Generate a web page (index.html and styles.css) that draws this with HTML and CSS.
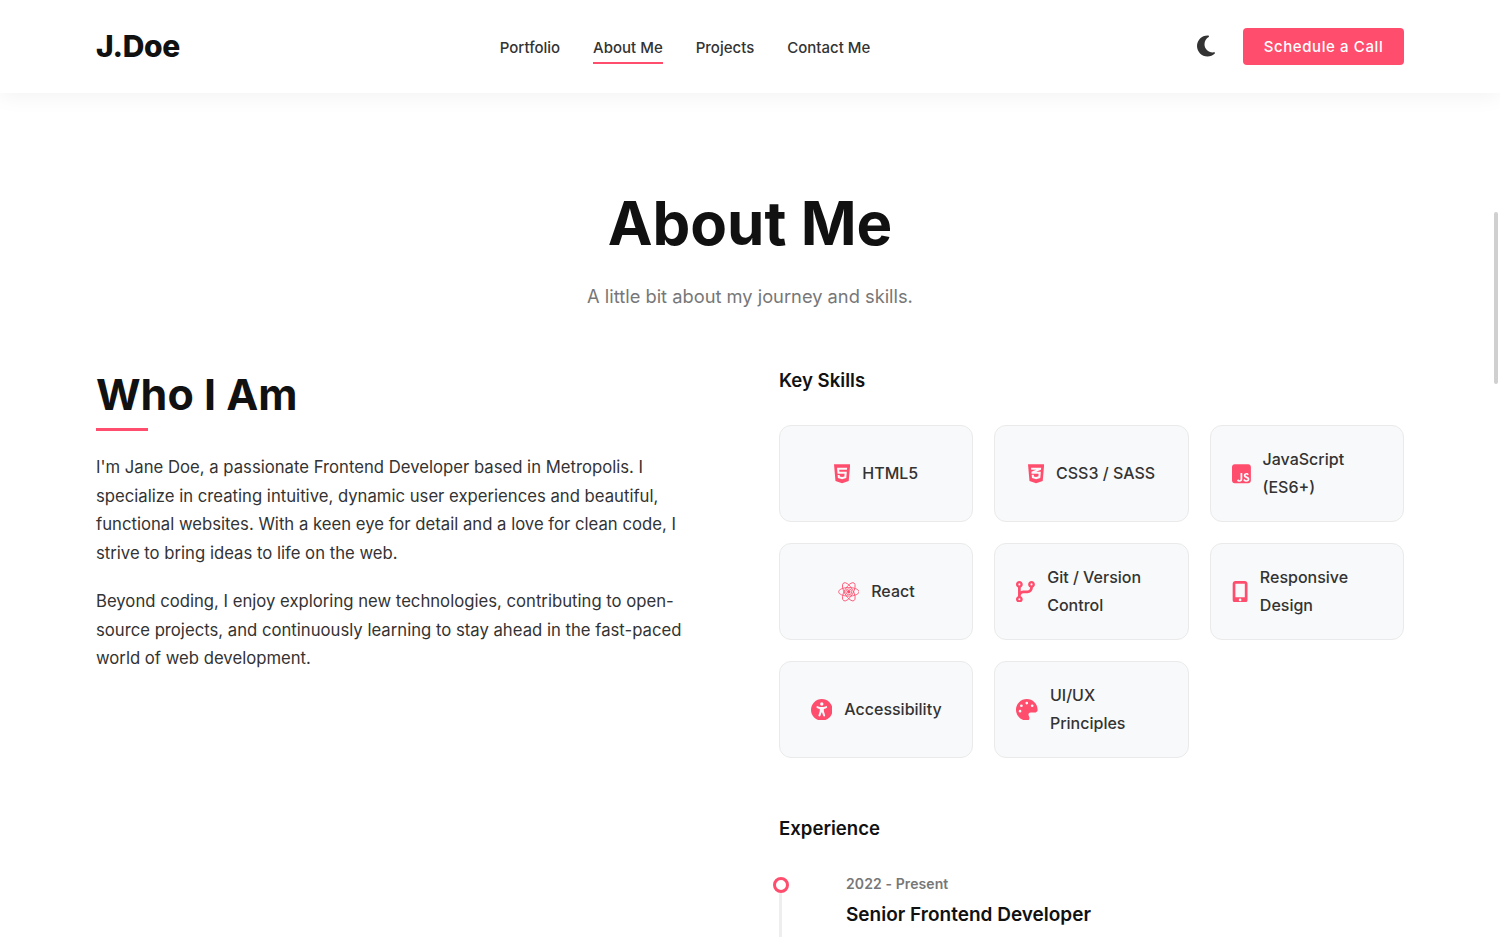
FILE: index.html
```html
<!DOCTYPE html>
<html lang="en">
<head>
    <meta charset="UTF-8">
    <meta name="viewport" content="width=device-width, initial-scale=1.0">
    <title>About Me - J.Doe</title>
    <link rel="stylesheet" href="styles.css">
</head>
<body>

    <header class="site-header">
        <div class="logo">J.Doe</div>
        <nav class="nav">
            <a href="#">Portfolio</a>
            <a href="#" class="active">About Me</a>
            <a href="#">Projects</a>
            <a href="#">Contact Me</a>
        </nav>
        <div class="header-actions">
            <svg class="moon" viewBox="0 0 384 512"><path d="M223.5 32C100 32 0 132.3 0 256S100 480 223.5 480c60.6 0 115.5-24.2 155.8-63.4c5-4.9 6.3-12.5 3.1-18.7s-10.1-9.7-17-8.5c-9.8 1.7-19.8 2.6-30.1 2.6c-96.9 0-175.5-78.8-175.5-176c0-65.8 36-123.1 89.3-153.3c6.1-3.5 9.2-10.5 7.7-17.3s-7.3-11.9-14.3-12.5c-6.3-.5-12.6-.8-19-.8z"/></svg>
            <a href="#" class="btn">Schedule a Call</a>
        </div>
    </header>

    <main class="page">
        <section class="page-title">
            <h1>About Me</h1>
            <p>A little bit about my journey and skills.</p>
        </section>

        <div class="about-grid">
            <!-- Left column -->
            <section class="who">
                <h2>Who I Am</h2>
                <p>I'm Jane Doe, a passionate Frontend Developer based in Metropolis. I specialize in creating intuitive, dynamic user experiences and beautiful, functional websites. With a keen eye for detail and a love for clean code, I strive to bring ideas to life on the web.</p>
                <p>Beyond coding, I enjoy exploring new technologies, contributing to open-source projects, and continuously learning to stay ahead in the fast-paced world of web development.</p>
            </section>

            <!-- Right column -->
            <section class="side">
                <h3>Key Skills</h3>
                <div class="skills">
                    <div class="skill">
                        <svg viewBox="0 0 384 512"><path d="M0 32l34.9 395.8L191.5 480l157.6-52.2L384 32H0zm308.2 127.9H124.4l4.1 49.4h175.6l-13.6 148.4-97.9 27v.3h-1.1l-98.7-27.3-6-75.8h47.7L138 320l53.5 14.5 53.7-14.5 6-62.2H84.3L71.5 112.2h241.1l-4.4 47.7z"/></svg>
                        <span>HTML5</span>
                    </div>
                    <div class="skill">
                        <svg viewBox="0 0 384 512"><path d="M0 32l34.9 395.8L192 480l157.1-52.2L384 32H0zm313.1 80l-4.8 47.3L193 208.6l-.3.1h111.5l-12.8 146.6-98.2 28.7-98.8-29.2-6.4-73.9h48.9l3.2 38.3 52.6 13.3 54.7-15.4 3.7-61.6-166.3-.5v-.1l-.2.1-3.6-46.3L193.1 162l6.5-2.7H76.7L70.9 112h242.2z"/></svg>
                        <span>CSS3 / SASS</span>
                    </div>
                    <div class="skill">
                        <svg viewBox="0 0 448 512"><path d="M448 96c0-35.3-28.7-64-64-64H64C28.7 32 0 60.7 0 96V416c0 35.3 28.7 64 64 64H384c35.3 0 64-28.7 64-64V96zM180.9 444.9c-33.7 0-53.2-17.4-63.2-38.5L152 385.7c6.6 11.7 12.6 21.6 27.1 21.6c13.8 0 22.6-5.4 22.6-26.5V237.7h42.1V381.4c0 43.6-25.6 63.5-62.9 63.5zm85.8-43L301 382.1c9 14.7 20.8 25.6 41.5 25.6c17.4 0 28.6-8.7 28.6-20.8c0-14.4-11.4-19.5-30.7-28l-10.5-4.5c-30.4-12.9-50.5-29.2-50.5-63.5c0-31.6 24.1-55.6 61.6-55.6c26.8 0 46 9.3 59.8 33.7L368 290c-7.2-12.9-15-18-27.1-18c-12.3 0-20.1 7.8-20.1 18c0 12.6 7.8 17.7 25.9 25.6l10.5 4.5c35.8 15.3 55.9 31 55.9 66.2c0 37.8-29.8 58.6-69.7 58.6c-39.1 0-64.4-18.6-76.7-43z"/></svg>
                        <span>JavaScript (ES6+)</span>
                    </div>
                    <div class="skill">
                        <svg viewBox="0 0 24 24" class="react">
                            <circle cx="12" cy="12" r="1.9"/>
                            <g class="orbit">
                                <circle cx="12" cy="12" r="3.3"/>
                                <ellipse cx="12" cy="12" rx="11.4" ry="4.8"/>
                                <ellipse cx="12" cy="12" rx="11.4" ry="4.8" transform="rotate(60 12 12)"/>
                                <ellipse cx="12" cy="12" rx="11.4" ry="4.8" transform="rotate(120 12 12)"/>
                            </g>
                        </svg>
                        <span>React</span>
                    </div>
                    <div class="skill">
                        <svg viewBox="0 0 448 512"><path d="M80 104a24 24 0 1 0 0-48 24 24 0 1 0 0 48zm80-24c0 32.8-19.7 61-48 73.3v87.8c18.8-10.9 40.7-17.1 64-17.1h96c35.3 0 64-28.7 64-64v-6.7C307.7 141 288 112.8 288 80c0-44.2 35.8-80 80-80s80 35.8 80 80c0 32.8-19.7 61-48 73.3V160c0 70.7-57.3 128-128 128H176c-35.3 0-64 28.7-64 64v6.7c28.3 12.3 48 40.5 48 73.3c0 44.2-35.8 80-80 80s-80-35.8-80-80c0-32.8 19.7-61 48-73.3V352 153.3C19.7 141 0 112.8 0 80C0 35.8 35.8 0 80 0s80 35.8 80 80zm232 0a24 24 0 1 0 -48 0 24 24 0 1 0 48 0zM80 456a24 24 0 1 0 0-48 24 24 0 1 0 0 48z"/></svg>
                        <span>Git / Version Control</span>
                    </div>
                    <div class="skill">
                        <svg viewBox="0 0 384 512"><path d="M16 64C16 28.7 44.7 0 80 0H304c35.3 0 64 28.7 64 64V448c0 35.3-28.7 64-64 64H80c-35.3 0-64-28.7-64-64V64zM224 448a32 32 0 1 0 -64 0 32 32 0 1 0 64 0zM304 64H80V384H304V64z"/></svg>
                        <span>Responsive Design</span>
                    </div>
                    <div class="skill">
                        <svg viewBox="0 0 512 512"><path d="M0 256a256 256 0 1 1 512 0A256 256 0 1 1 0 256zm161.5-86.1c-12.2-5.2-26.3 .4-31.5 12.6s.4 26.3 12.6 31.5l11.9 5.1c17.3 7.4 35.2 12.9 53.6 16.3v50.1c0 4.3-.7 8.6-2.1 12.6l-28.7 86.1c-4.2 12.6 2.6 26.2 15.2 30.4s26.2-2.6 30.4-15.2l24.4-73.2c1.3-3.8 4.8-6.4 8.8-6.4s7.6 2.6 8.8 6.4l24.4 73.2c4.2 12.6 17.8 19.4 30.4 15.2s19.4-17.8 15.2-30.4l-28.7-86.1c-1.4-4.1-2.1-8.3-2.1-12.6V235.5c18.4-3.5 36.3-8.9 53.6-16.3l11.9-5.1c12.2-5.2 17.8-19.3 12.6-31.5s-19.3-17.8-31.5-12.6L338.7 175c-26.1 11.2-54.2 17-82.7 17s-56.5-5.8-82.7-17l-11.9-5.1zM256 160a40 40 0 1 0 0-80 40 40 0 1 0 0 80z"/></svg>
                        <span>Accessibility</span>
                    </div>
                    <div class="skill">
                        <svg viewBox="0 0 512 512"><path d="M512 256c0 .9 0 1.8 0 2.7c-.4 36.5-33.6 61.3-70.1 61.3H344c-26.5 0-48 21.5-48 48c0 3.4 .4 6.7 1 9.9c2.1 10.2 6.5 20 10.8 29.9c6.1 13.8 12.1 27.5 12.1 42c0 31.8-21.6 60.7-53.4 62c-3.5 .1-7 .2-10.6 .2C114.6 512 0 397.4 0 256S114.6 0 256 0S512 114.6 512 256zM128 288a32 32 0 1 0 -64 0 32 32 0 1 0 64 0zm0-96a32 32 0 1 0 0-64 32 32 0 1 0 0 64zM288 96a32 32 0 1 0 -64 0 32 32 0 1 0 64 0zm96 96a32 32 0 1 0 0-64 32 32 0 1 0 0 64z"/></svg>
                        <span>UI/UX Principles</span>
                    </div>
                </div>

                <h3 class="experience-title">Experience</h3>
                <div class="timeline-item">
                    <div class="timeline-mark"></div>
                    <div class="timeline-body">
                        <div class="date">2022 - Present</div>
                        <h4>Senior Frontend Developer</h4>
                    </div>
                </div>
            </section>
        </div>
    </main>

    <div class="scroll-thumb"></div>

</body>
</html>
```

FILE: styles.css
```css
html, body {
    height: 100%;
}
body {
    margin: 0;
    height: 937px;
    overflow: hidden;
    background-color: #fff;
    color: #333;
    font-family: 'Inter', sans-serif;
}
h1, h2, h3, h4, p {
    margin: 0;
}
a {
    color: inherit;
    text-decoration: none;
}

/* Header */
.site-header {
    height: 93px;
    padding: 0 96px;
    display: flex;
    justify-content: space-between;
    align-items: center;
    background-color: #fff;
    box-shadow: 0 4px 20px rgba(0, 0, 0, 0.05);
    box-sizing: border-box;
}
.logo {
    font-size: 30px;
    font-weight: 800;
    line-height: 36px;
    color: #111;
    letter-spacing: -0.3px;
    margin-top: -2px;
}
.nav {
    display: flex;
    gap: 33px;
    margin-right: 7px;
}
.nav a {
    font-size: 15px;
    font-weight: 500;
    line-height: 24px;
    padding: 7px 0 2px;
    border-bottom: 2px solid transparent;
}
.nav a.active {
    border-bottom-color: #ff4d6d;
}
.header-actions {
    display: flex;
    align-items: center;
    gap: 28px;
}
.moon {
    width: 18px;
    height: 24px;
    fill: #333;
    margin-top: -2px;
}
.btn {
    width: 161px;
    height: 37px;
    line-height: 37px;
    text-align: center;
    border-radius: 4px;
    background-color: #ff4d6d;
    color: #fff;
    font-size: 15px;
    font-weight: 500;
    letter-spacing: 0.6px;
    margin-top: -1px;
}

/* Page */
.page {
    padding: 0 96px;
}
.page-title {
    padding-top: 91px;
    text-align: center;
}
.page-title h1 {
    font-size: 60px;
    font-weight: 700;
    line-height: 78px;
    color: #111;
}
.page-title p {
    margin-top: 20px;
    font-size: 18.3px;
    line-height: 28px;
    color: #777;
}
.about-grid {
    display: grid;
    grid-template-columns: 1fr 625px;
    gap: 60px;
    margin-top: 49px;
}

/* Left column */
.who h2 {
    font-size: 43px;
    font-weight: 700;
    line-height: 56px;
    color: #111;
    margin-top: 7px;
}
.who h2::after {
    content: "";
    display: block;
    width: 52px;
    height: 3px;
    margin-top: 6px;
    background-color: #ff4d6d;
}
.who p {
    max-width: 590px;
    font-size: 16.7px;
    line-height: 28.5px;
    margin-bottom: 20px;
    color: #333;
}
.who h2 + p {
    margin-top: 22px;
}

/* Right column */
.side h3 {
    font-size: 18.6px;
    font-weight: 600;
    line-height: 30px;
    color: #111;
}
.side > h3:first-child {
    margin-top: 6px;
}
.skills {
    display: grid;
    grid-template-columns: repeat(3, 1fr);
    grid-auto-rows: 97px;
    gap: 21px;
    margin-top: 30px;
}
.skill {
    display: flex;
    align-items: center;
    justify-content: center;
    gap: 12px;
    padding: 0 21px;
    border: 1px solid #eaeaea;
    border-radius: 12px;
    background-color: #f8f9fa;
    font-size: 16px;
    font-weight: 500;
    line-height: 27.2px;
}
.skill svg {
    height: 21.6px;
    flex-shrink: 0;
    fill: #ff4d6d;
}
.skill .react {
    width: 21.6px;
}
.orbit {
    fill: none;
    stroke: #ff4d6d;
    stroke-width: 0.9;
}
.experience-title {
    margin-top: 55px;
}

/* Timeline */
.timeline-item {
    display: flex;
    gap: 57px;
    margin-top: 29px;
}
.timeline-mark {
    width: 16px;
    height: 16px;
    margin-left: -6px;
    margin-top: 5px;
    flex-shrink: 0;
    position: relative;
    border: 3px solid #ff4d6d;
    border-radius: 50%;
    box-sizing: border-box;
    background-color: #fff;
}
.timeline-mark::after {
    content: "";
    position: absolute;
    top: 13px;
    left: 3px;
    width: 3px;
    height: 60px;
    background-color: #eee;
}
.date {
    font-size: 14px;
    font-weight: 600;
    line-height: 23px;
    color: #777;
    letter-spacing: 0.1px;
}
.timeline-body h4 {
    margin-top: 5px;
    font-size: 19px;
    font-weight: 600;
    line-height: 30px;
    color: #111;
}

/* Overlay scrollbar */
.scroll-thumb {
    position: absolute;
    top: 212px;
    right: 2px;
    width: 4px;
    height: 172px;
    border-radius: 2px;
    background-color: #d0d0d0;
}
```
